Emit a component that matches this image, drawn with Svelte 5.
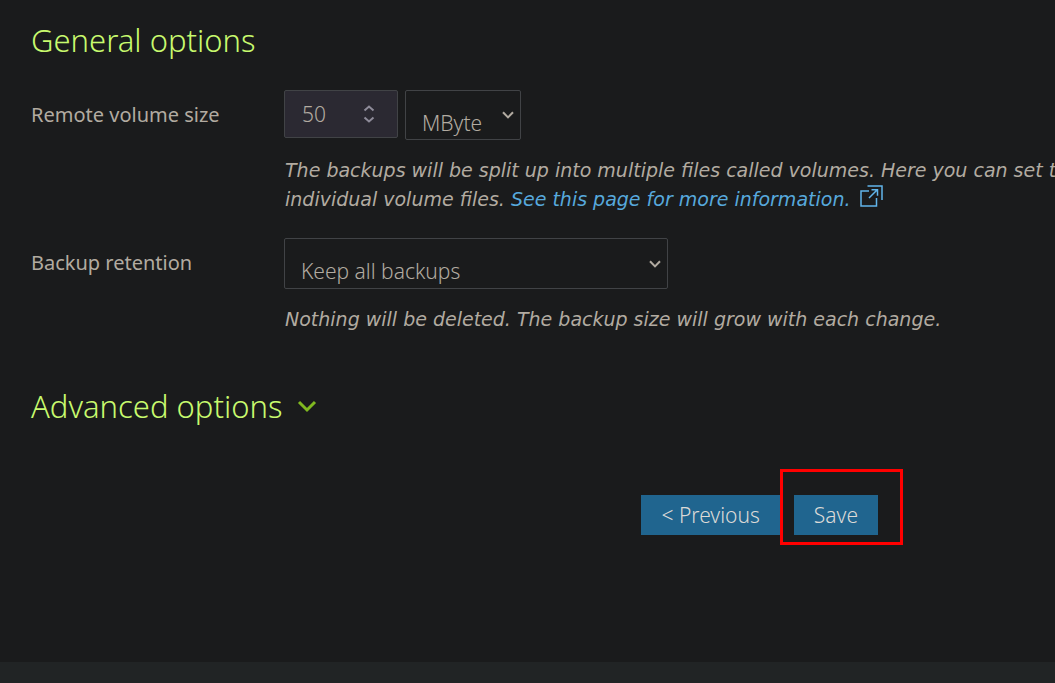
<script>
  let size = $state(50);
  let unit = $state('MByte');
  let retention = $state('Keep all backups');
  const step = (n) => (size = Math.max(1, size + n));
</script>

<main>
  <form onsubmit={(e) => e.preventDefault()}>
    <h2>General options</h2>

    <div class="row">
      <label for="size">Remote volume size</label>
      <div class="field">
        <div class="controls">
          <div class="number">
            <input id="size" type="number" bind:value={size} />
            <div class="spin">
              <button type="button" aria-label="Increase" onclick={() => step(1)}>
                <svg width="12" height="7" viewBox="0 0 12 7"><path d="M1.5 5.5 6 1.5l4.5 4" /></svg>
              </button>
              <button type="button" aria-label="Decrease" onclick={() => step(-1)}>
                <svg width="12" height="7" viewBox="0 0 12 7"><path d="M1.5 1.5 6 5.5l4.5-4" /></svg>
              </button>
            </div>
          </div>
          <div class="select unit">
            <select aria-label="Unit" bind:value={unit}>
              <option>MByte</option>
            </select>
            <svg width="12" height="8" viewBox="0 0 12 8"><path d="M1 1.2 6 6.4l5-5.2" /></svg>
          </div>
        </div>
        <p>
          The backups will be split up into multiple files called volumes. Here you can set the<br />
          individual volume files. <a href="#volumes">See this page for more information.<svg class="external" width="23" height="22" viewBox="0 0 23 22"><path d="M9 6H1v15h15.5V13M7.5 1H22v14M9 13l8.500-8.500M11.500 4.700h6v6" /></svg></a>
        </p>
      </div>
    </div>

    <div class="row">
      <label for="retention">Backup retention</label>
      <div class="field">
        <div class="select retention">
          <select id="retention" bind:value={retention}>
            <option>Keep all backups</option>
          </select>
          <svg width="12" height="8" viewBox="0 0 12 8"><path d="M1 1.2 6 6.4l5-5.2" /></svg>
        </div>
        <p>Nothing will be deleted. The backup size will grow with each change.</p>
      </div>
    </div>

    <h2 class="advanced">
      <button type="button">
        Advanced options
        <svg width="20" height="14" viewBox="0 0 20 14"><path d="M2 3 10 11l8-8" /></svg>
      </button>
    </h2>

    <div class="actions">
      <button type="button">&lt; Previous</button>
      <div class="highlight"><button type="submit">Save</button></div>
    </div>
  </form>
  <footer></footer>
</main>

<style>
  :global(body) {
    margin: 0;
    background: #1a1b1c;
  }
  main {
    box-sizing: border-box;
    min-height: 100vh;
    display: flex;
    flex-direction: column;
    overflow: hidden;
    color: #b2aba1;
    font: 400 20px/29px "Noto Sans", sans-serif;
  }
  form {
    flex: 1;
    padding: 19px 0 0 31px;
  }
  h2 {
    margin: 0 0 29px;
    color: #c8fa6e;
    font-size: 31px;
    font-weight: 300;
    line-height: 42px;
  }
  .row {
    display: grid;
    grid-template-columns: 253px 1fr;
    margin-bottom: 24px;
  }
  label {
    padding-top: 10px;
  }
  .controls {
    display: flex;
    align-items: flex-start;
    gap: 7px;
  }
  .number,
  .select {
    box-sizing: border-box;
    display: flex;
    align-items: center;
    border: 1px solid #414346;
    border-radius: 2px;
  }
  .number {
    width: 114px;
    height: 48px;
    padding: 0 22px 0 17px;
    background: #2b2932;
  }
  input,
  select {
    box-sizing: border-box;
    min-width: 0;
    flex: 1;
    margin: 0;
    padding: 0;
    border: 0;
    outline: 0;
    background: transparent;
    color: inherit;
    font: inherit;
    font-size: 21px;
    font-weight: 300;
    appearance: none;
  }
  input {
    appearance: textfield;
  }
  input::-webkit-inner-spin-button {
    appearance: none;
  }
  .spin {
    display: flex;
    flex-direction: column;
    gap: 4px;
  }
  .spin button {
    display: block;
    padding: 0;
    border: 0;
    background: none;
  }
  svg {
    display: block;
    fill: none;
    stroke: currentColor;
    stroke-width: 2;
  }
  .spin svg {
    stroke: #8e8b99;
  }
  .select {
    display: grid;
    height: 50px;
  }
  .select > * {
    grid-area: 1 / 1;
  }
  .select select {
    width: 100%;
    height: 48px;
    padding: 16px 28px 0 16px;
  }
  .select svg {
    justify-self: end;
    margin-right: 6px;
    pointer-events: none;
  }
  .unit {
    width: 116px;
  }
  .retention {
    width: 384px;
    height: 51px;
  }
  p {
    margin: 16px 0 0;
    padding-left: 1px;
    font-family: "DejaVu Sans", sans-serif;
    font-size: 19px;
    font-style: italic;
    white-space: nowrap;
  }
  a {
    color: #57a9dc;
    text-decoration: none;
  }
  .external {
    display: inline-block;
    margin-left: 10px;
    vertical-align: -1px;
    stroke: #61b5ea;
    stroke-width: 1.5;
  }
  .advanced {
    margin: 51px 0 68px;
  }
  .advanced button {
    display: flex;
    align-items: center;
    gap: 15px;
    padding: 0;
    border: 0;
    background: none;
    color: inherit;
    font: inherit;
  }
  .advanced svg {
    stroke: #80b920;
    stroke-width: 3;
  }
  .actions {
    display: flex;
    justify-content: flex-end;
    gap: 14px;
    padding-right: 177px;
  }
  .actions button {
    display: block;
    height: 40px;
    padding: 0 20px;
    border: 0;
    background: #20658f;
    color: #dcdad7;
    font: inherit;
    font-size: 21px;
    font-weight: 300;
  }
  .highlight {
    position: relative;
  }
  .highlight::after {
    content: "";
    position: absolute;
    inset: -26px -25px -10px -14px;
    border: 3px solid #f00;
    pointer-events: none;
  }
  footer {
    height: 21px;
    background: #212425;
  }
</style>
